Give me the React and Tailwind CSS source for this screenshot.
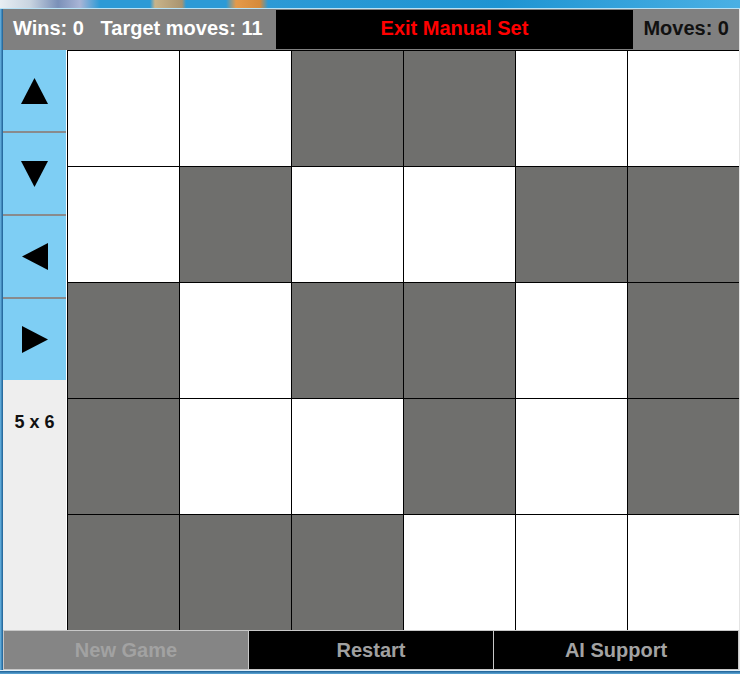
import React from 'react';

const board = [
  [0, 0, 1, 1, 0, 0],
  [0, 1, 0, 0, 1, 1],
  [1, 0, 1, 1, 0, 1],
  [1, 0, 0, 1, 0, 1],
  [1, 1, 1, 0, 0, 0],
];

const arrows = [
  { label: 'up', w: 27, h: 26, points: '13.5,0 27,26 0,26' },
  { label: 'down', w: 27, h: 26, points: '0,0 27,0 13.5,26' },
  { label: 'left', w: 26, h: 27, points: '0,13.5 26,0 26,27' },
  { label: 'right', w: 26, h: 27, points: '0,0 26,13.5 0,27' },
];

export default function App() {
  return (
    <div className="w-[740px] h-[674px] flex flex-col bg-[#2a86c2] font-['Liberation_Sans',Arial,sans-serif] font-bold overflow-hidden">
      {/* desktop strip behind the window */}
      <div className="h-[8px] bg-[linear-gradient(90deg,#e8eef3_0px,#c8d4e0_30px,#7a90b8_58px,#a9b5d6_80px,#2c9ad6_100px,#2c9ad6_150px,#c9b48a_155px,#a89470_182px,#2c9ad6_186px,#2c9ad6_226px,#e59a4a_236px,#d58a3a_260px,#2c9ad6_268px,#1e94d2_500px,#4ab0e4_740px)]" />
      <div className="h-px bg-[#b8e2f6]" />

      <div className="flex flex-1">
        <div className="w-[3px] bg-[linear-gradient(90deg,#6bb8e6,#1b5d92)]" />

        <div className="w-[736px] flex flex-col bg-white">
          {/* top bar */}
          <div className="h-[41px] flex bg-[#808080] text-[20px] leading-[23px]">
            <div className="w-[273px] pl-[10px] pt-[8px] text-white whitespace-pre">Wins: 0   Target moves: 11</div>
            <button className="w-[357px] my-px bg-black text-[#ff0000] flex justify-center pt-[7px]">Exit Manual Set</button>
            <div className="flex-1 pr-[10px] pt-[8px] text-right text-[#111111]">Moves: 0</div>
          </div>

          {/* board area */}
          <div className="flex h-[580px]">
            <div className="w-[64px] flex flex-col border-r border-white">
              {arrows.map((a, i) => (
                <React.Fragment key={a.label}>
                  {i > 0 && <div className="h-[2px] bg-[#898b8d]" />}
                  <button className="h-[81px] bg-[#7ecef4] flex items-center justify-center">
                    <svg width={a.w} height={a.h} viewBox={`0 0 ${a.w} ${a.h}`}>
                      <polygon points={a.points} fill="#000" />
                    </svg>
                  </button>
                </React.Fragment>
              ))}
              <div className="flex-1 bg-[#eeeeee] pt-[32px] text-center text-[18px] leading-[20px] text-[#111111]">5 x 6</div>
            </div>

            <div className="grid grid-cols-[repeat(6,112px)] grid-rows-[repeat(5,116px)]">
              {board.flat().map((v, i) => (
                <div
                  key={i}
                  className={v ? 'border-l border-t border-black bg-[#6f6f6d]' : 'border-l border-t border-black bg-white'}
                />
              ))}
            </div>
          </div>

          {/* bottom bar */}
          <div className="h-[40px] flex gap-px p-px bg-[#c8c8c8] text-[20px] leading-[23px]">
            <button className="flex-1 bg-[#858585] text-[#a2a2a2]">New Game</button>
            <button className="flex-1 bg-black text-[#a0a0a0]">Restart</button>
            <button className="flex-1 bg-black text-[#a3a3a3]">AI Support</button>
          </div>
        </div>

        <div className="w-px bg-[#e4e4e4]" />
      </div>

      <div className="h-px bg-[#dfeef8]" />
      <div className="h-[3px] bg-[linear-gradient(180deg,#1b5d92,#5fa9d9)]" />
    </div>
  );
}
